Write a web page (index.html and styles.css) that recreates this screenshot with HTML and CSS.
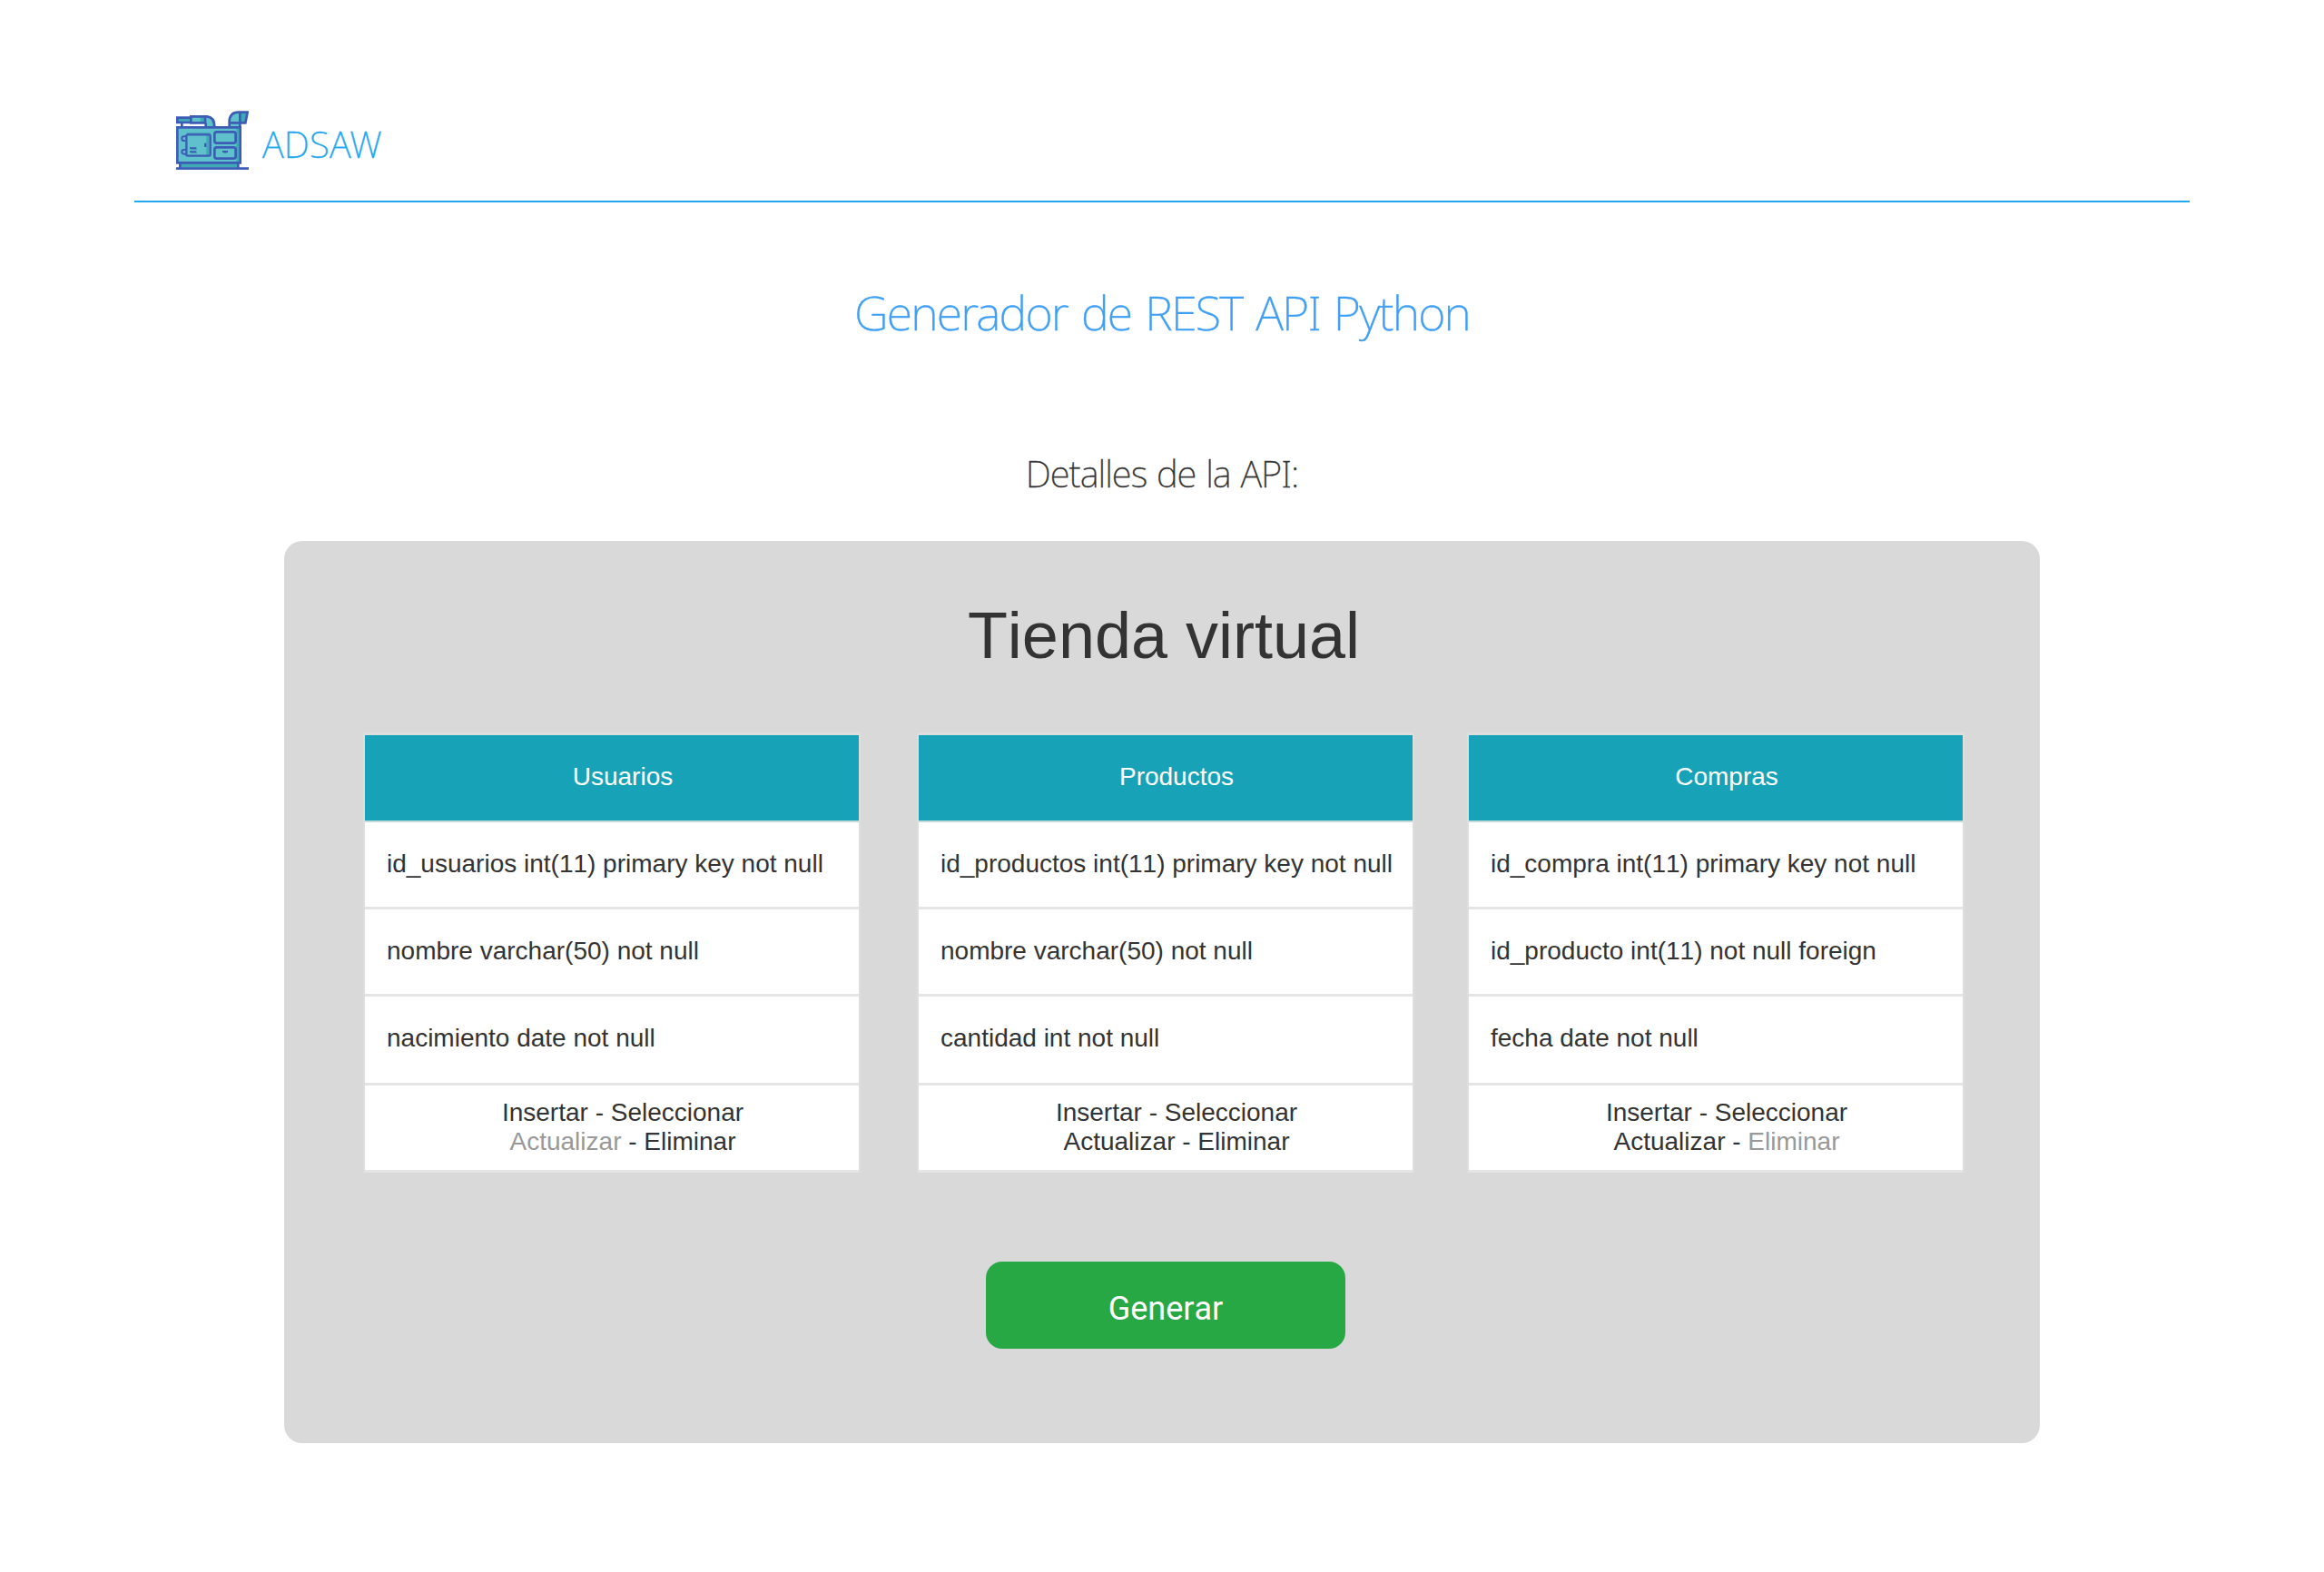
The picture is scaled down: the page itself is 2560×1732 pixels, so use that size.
FILE: index.html
```html
<!DOCTYPE html>
<html lang="es">
<head>
<meta charset="utf-8">
<title>ADSAW</title>
<link rel="stylesheet" href="styles.css">
</head>
<body>
<header class="header">
  <svg class="logo" viewBox="42 36 240 195" aria-hidden="true">
    <!-- base -->
    <path fill="#3fa9b5" d="M56 210H246V224H56z"/>
    <!-- arm -->
    <path fill="#3fa9b5" d="M46 58H92V75H46z"/>
    <path fill="#5fc1cb" d="M92 57H137V76H92z"/>
    <path fill="#3fa9b5" d="M122 57H136V76H122z"/>
    <path fill="#5fc1cb" d="M140 57H150Q169 61 169 89H140z"/>
    <path fill="#3fa9b5" d="M154 58Q169 66 169 89H162Q162 68 154 62z"/>
    <!-- chute -->
    <path fill="#5fc1cb" d="M218 90V68Q221 43 248 41H253V90z"/>
    <path fill="#3fa9b5" d="M254 41H278L271 76H254z"/>
    <!-- body -->
    <path fill="#5fc1cb" d="M46 91H254V208H46z"/>
    <path fill="#3fa9b5" d="M241 95H250V205H241zM142 116H151V184H142zM234 109H240V143H234zM234 160H240V194H234z"/>
    <path fill="#4396b4" d="M78 109H155V113H78z"/>
    <g fill="none" stroke="#3c5cb6" stroke-width="8">
      <path d="M46 91H254V208H46z"/>
      <path d="M90 59H46V75H90M91 55H138V76H91z"/>
      <path d="M138 55H145Q169 58 169 88M140 76V90M61 77V90"/>
      <path d="M218 90V68Q221 41 248 41H278L271 76H222M253 41V90"/>
      <rect x="76" y="115" width="79" height="70" rx="4" stroke-width="7"/>
      <rect x="169" y="106" width="70" height="37" rx="7"/>
      <rect x="169" y="157" width="70" height="37" rx="7"/>
      <path stroke-width="6" d="M76 121H68Q61 121 61 128T68 135H72M76 165H68Q61 165 61 172T68 179H76"/>
      <path d="M55 210V226M247 210V226M42 227H282"/>
    </g>
    <path fill="#3c5cb6" d="M135 143H142V156H135zM87 157H109V162H87zM87 169H109V174H87zM195 168H213V174H195z"/>
    <path fill="#4396b4" d="M90 162H111V165H90zM90 174H111V177H90zM199 174H210V177H199z"/>
  </svg>
  <span class="brand">ADSAW</span>
</header>
<main class="main">
  <h1 class="title">Generador de REST API Python</h1>
  <h2 class="subtitle">Detalles de la API:</h2>
  <section class="panel">
    <h3 class="api-name">Tienda virtual</h3>
    <div class="tables">
      <div class="table">
        <div class="table-head">Usuarios</div>
        <div class="row">id_usuarios int(11) primary key not null</div>
        <div class="row">nombre varchar(50) not null</div>
        <div class="row row-tall">nacimiento date not null</div>
        <div class="row actions"><div>Insertar - Seleccionar</div><div><span class="off">Actualizar</span> - Eliminar</div></div>
      </div>
      <div class="table">
        <div class="table-head">Productos</div>
        <div class="row">id_productos int(11) primary key not null</div>
        <div class="row">nombre varchar(50) not null</div>
        <div class="row row-tall">cantidad int not null</div>
        <div class="row actions"><div>Insertar - Seleccionar</div><div>Actualizar - Eliminar</div></div>
      </div>
      <div class="table">
        <div class="table-head">Compras</div>
        <div class="row">id_compra int(11) primary key not null</div>
        <div class="row">id_producto int(11) not null foreign</div>
        <div class="row row-tall">fecha date not null</div>
        <div class="row actions"><div>Insertar - Seleccionar</div><div>Actualizar - <span class="off">Eliminar</span></div></div>
      </div>
    </div>
    <button class="generate" type="button">Generar</button>
  </section>
</main>
</body>
</html>
```

FILE: styles.css
```css
* {
  box-sizing: border-box;
}

body {
  margin: 0;
  background: #fff;
  color: #333;
  font-family: "Liberation Sans", Arial, sans-serif;
}

.header {
  display: flex;
  align-items: flex-start;
  height: 223px;
  margin: 0 148px;
  padding: 122px 0 0 46px;
  border-bottom: 2px solid #22a7f0;
}

.logo {
  width: 80px;
  height: 65px;
}

.brand {
  margin: 9px 0 0 15px;
  color: #22a7f0;
  font: 200 40px/56px "Noto Sans", sans-serif;
  letter-spacing: 0.2px;
  -webkit-text-stroke: 0.4px;
}

.main {
  display: flex;
  flex-direction: column;
  align-items: center;
}

.title {
  margin: 85px 0 0;
  color: #409ff5;
  font: 200 52px/72px "Noto Sans", sans-serif;
  letter-spacing: -1.8px;
  word-spacing: 3.2px;
  -webkit-text-stroke: 0.4px;
}

.subtitle {
  margin: 114px 0 0;
  color: #333;
  font: 200 40px/56px "Noto Sans", sans-serif;
  letter-spacing: -1px;
  word-spacing: 1.4px;
  -webkit-text-stroke: 0.3px;
}

.panel {
  display: flex;
  flex-direction: column;
  align-items: center;
  width: 1934px;
  height: 994px;
  margin-top: 46px;
  padding-top: 64px;
  border-radius: 20px;
  background: #d9d9d9;
}

.api-name {
  margin: 0;
  padding-left: 4px;
  font-size: 72px;
  font-weight: 400;
  line-height: 80px;
  font-kerning: none;
}

.tables {
  display: grid;
  grid-template-columns: 548px 548px 548px;
  column-gap: 62px;
  width: 1764px;
  margin: 67px 0 0 4px;
}

.table:last-child {
  margin-left: -4px;
  margin-right: 4px;
}

.table {
  border: 2px solid #dedede;
  border-top-width: 3px;
  border-bottom: 0;
  font-size: 28px;
  line-height: 32px;
  font-kerning: none;
}

.table-head {
  height: 96px;
  padding: 30px 0 0 24px;
  border-bottom: 2px solid #c3dadd;
  background: #18a2b8;
  color: #fff;
  text-align: center;
}

.row {
  height: 96px;
  padding: 30px 0 0 24px;
  background: linear-gradient(#fff, #fff) top / 100% calc(100% - 3px) no-repeat, #e5e5e5;
  white-space: nowrap;
}

.row-tall {
  height: 98px;
}

.actions {
  padding-top: 14px;
  text-align: center;
}

.off {
  color: #999;
}

.generate {
  width: 396px;
  height: 96px;
  margin: 98px 0 0 8px;
  padding: 7px 0 0;
  border: 0;
  border-radius: 18px;
  background: #28a745;
  color: #fff;
  font: 400 36px/42px Roboto, sans-serif;
  font-kerning: none;
}
```
